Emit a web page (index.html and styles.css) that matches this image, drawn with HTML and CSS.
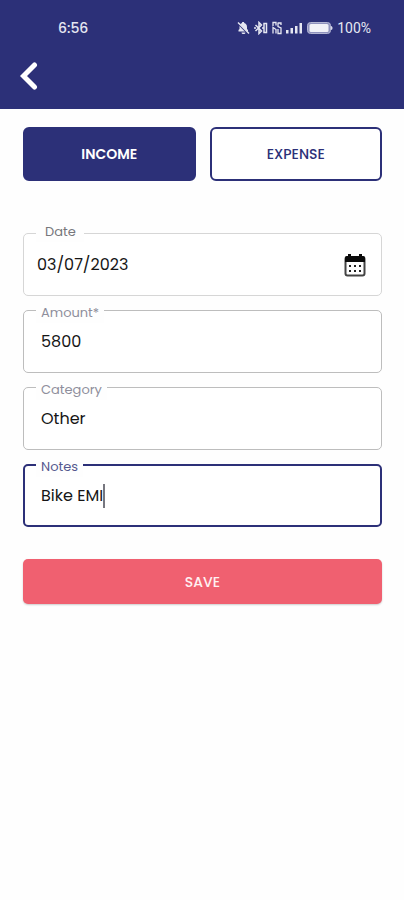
FILE: index.html
```html
<!DOCTYPE html>
<html lang="en">
<head>
<meta charset="utf-8">
<meta name="viewport" content="width=device-width, initial-scale=1">
<title>Add income</title>
<link rel="stylesheet" href="styles.css">
</head>
<body>
<header class="app-header">
  <div class="status-bar">
    <span class="clock">6:56</span>
    <div class="status-icons">
      <svg width="13" height="14" viewBox="0 0 13 14" aria-hidden="true">
        <path d="M1.500 10.500V9l1-1V6c0-2 1-3.400 2.600-3.900V1h2v1.100C9 2.600 10 4 10 6v2l1 1v1.500z" fill="currentColor"/>
        <path d="M4.500 11.500h4c0 2-4 2-4 0z" fill="currentColor"/>
        <path d="M1 2.500l11 11" stroke="#2c3078" stroke-width="1.600"/>
        <path d="M1 1.500l11 11" stroke="currentColor" stroke-width="1.400"/>
      </svg>
      <svg width="14" height="14" viewBox="0 0 14 14" fill="none" stroke="currentColor" aria-hidden="true">
        <path d="M1.500 4l6 6L5 12.500v-11L7.500 4l-6 6" stroke-width="1.500"/>
        <path d="M10 2.500h2.500v9H10z" stroke-width="1.500"/>
        <path d="M0 7h2M8 7h2" stroke-width="1.600"/>
      </svg>
      <svg width="10" height="14" viewBox="0 0 10 14" fill="none" stroke="currentColor" aria-hidden="true">
        <path d="M1 5V1.500h3v3M1 12.500v-6l3 2v4" stroke-width="1.300"/>
        <path d="M6 1.500v4l3 1.500v5.500H6V8M6 2h3v2" stroke-width="1.300"/>
      </svg>
      <svg width="17" height="14" viewBox="0 0 17 14" fill="currentColor" aria-hidden="true">
        <rect x="0" y="9" width="2.500" height="3.500"/>
        <rect x="4.500" y="7" width="2.500" height="5.500"/>
        <rect x="9" y="5" width="2.500" height="7.500"/>
        <rect x="13.500" y="2" width="2.500" height="10.500"/>
      </svg>
      <svg width="26" height="14" viewBox="0 0 26 14" aria-hidden="true">
        <rect x=".5" y="1.500" width="23" height="11" rx="3" fill="#8f92bd" stroke="#b3b5d3"/>
        <rect x="2.500" y="3" width="19" height="8" rx="1.500" fill="#f2f2f8"/>
        <path d="M24 5c2 0 2 4 0 4z" fill="#d9daea"/>
      </svg>
      <span class="battery-level">100%</span>
    </div>
  </div>
  <button class="back" type="button" aria-label="Back">
    <svg width="20" height="30" viewBox="0 0 20 30" fill="none" stroke="currentColor" stroke-width="5" stroke-linecap="round" stroke-linejoin="miter" aria-hidden="true">
      <path d="M14.500 4L3.500 15l11 11"/>
    </svg>
  </button>
</header>
<main class="content">
  <div class="tabs">
    <button class="tab tab-active" type="button">INCOME</button>
    <button class="tab" type="button">EXPENSE</button>
  </div>
  <form class="entry-form">
    <div class="field field-date">
      <label for="date">Date</label>
      <input id="date" type="text" value="03/07/2023">
      <button class="calendar" type="button" aria-label="Pick a date">
        <svg width="22" height="24" viewBox="0 0 22 24" aria-hidden="true">
          <rect x="1.500" y="4" width="19" height="18.500" rx="2" fill="#fff" stroke="#444" stroke-width="2"/>
          <path d="M1 9V5a2 2 0 0 1 2-2h1V1h3v2h8V1h3v2h1a2 2 0 0 1 2 2v4z" fill="#0b0b0b"/>
          <path d="M5 12h2v2H5zM10 12h2v2h-2zM15 12h2v2h-2zM5 17h2v2H5zM10 17h2v2h-2zM15 17h2v2h-2z" fill="#222"/>
        </svg>
      </button>
    </div>
    <div class="field">
      <label for="amount">Amount*</label>
      <input id="amount" type="text" inputmode="numeric" value="5800">
    </div>
    <div class="field">
      <label for="category">Category</label>
      <input id="category" type="text" value="Other">
    </div>
    <div class="field field-active">
      <label for="notes">Notes</label>
      <input id="notes" type="text" value="Bike EMI">
      <span class="caret" aria-hidden="true"></span>
    </div>
    <button class="save" type="submit">SAVE</button>
  </form>
</main>
</body>
</html>
```
FILE: styles.css
```css
:root {
  --navy: #2c3078;
  --coral: #f06070;
}

* {
  box-sizing: border-box;
}

body {
  margin: 0;
  min-height: 100vh;
  background: #fefefe;
  color: #161616;
  font-family: Poppins, Inter, "Open Sans", sans-serif;
}

button,
input {
  font: inherit;
  color: inherit;
}

button {
  padding: 0;
  border: 0;
  background: none;
}

.app-header {
  padding: 18px 20px;
  background: var(--navy);
  color: #fff;
}

.status-bar {
  display: flex;
  align-items: center;
  justify-content: space-between;
  height: 20px;
  padding: 0 13px 0 38px;
  color: #e6e7f2;
  font-size: 14px;
  line-height: 20px;
}

.clock {
  font-weight: 500;
}

.status-icons {
  display: flex;
  align-items: center;
  gap: 4px;
}

.battery-level {
  font-family: Roboto, sans-serif;
}

.back {
  display: block;
  margin-top: 23px;
  height: 30px;
}

.back svg {
  display: block;
}

.content {
  padding: 18px 22px 24px 23px;
}

.tabs {
  display: flex;
  gap: 14px;
}

.tab {
  flex: 1;
  height: 54px;
  border: 2px solid var(--navy);
  border-radius: 6px;
  background: #fff;
  color: var(--navy);
  font-size: 14px;
  font-weight: 500;
  line-height: 20px;
}

.tab-active {
  background: var(--navy);
  color: #fff;
  font-weight: 600;
}

.entry-form {
  display: flex;
  flex-direction: column;
  gap: 14px;
  margin-top: 52px;
}

.field {
  position: relative;
  display: flex;
  align-items: center;
  height: 63px;
  padding: 0 17px;
  border: 1px solid #bdbdbd;
  border-radius: 5px;
  background: #fff;
}

.field label {
  position: absolute;
  top: -8px;
  left: 12px;
  padding: 0 5px;
  background: #fefefe;
  color: #8e8e9c;
  font-size: 13px;
  line-height: 20px;
}

.field input {
  flex: 1;
  min-width: 0;
  padding: 0;
  border: 0;
  outline: 0;
  background: none;
  font-size: 16px;
  line-height: 24px;
}

.field-date {
  padding: 0 15px 0 13px;
  border-color: #d6d6d6;
}

.field-date label {
  top: -12px;
  padding: 0 8px 0 9px;
  color: #77777c;
}

.calendar svg {
  display: block;
}

.field-active {
  padding: 0 16px;
  border: 2px solid var(--navy);
}

.field-active label {
  top: -9px;
  left: 11px;
  color: #55588e;
}

.field-active input {
  flex: none;
  field-sizing: content;
}

.caret {
  width: 2px;
  height: 24px;
  background: #77777f;
}

.save {
  height: 45px;
  margin-top: 18px;
  border-radius: 5px;
  background: var(--coral);
  box-shadow: 0 1px 2px #0003;
  color: #fff0f2;
  font-size: 14px;
  font-weight: 500;
  line-height: 20px;
}
```
